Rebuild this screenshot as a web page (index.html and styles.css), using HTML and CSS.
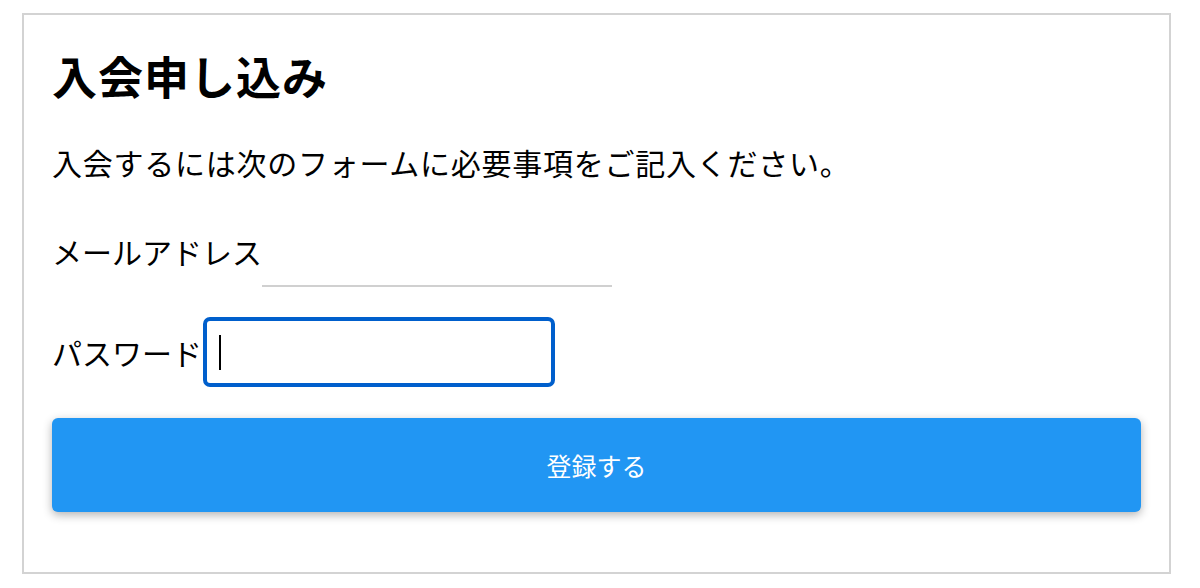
FILE: index.html
```html
<!DOCTYPE html>
<html lang="ja">
<head>
    <meta charset="UTF-8">
    <meta name="viewport" content="width=device-width, initial-scale=1.0">
    <title>入会申し込み</title>
    <link rel="stylesheet" href="styles.css">
</head>
<body>
    <div class="container">
        <h1>入会申し込み</h1>
        <p>入会するには次のフォームに必要事項をご記入ください。</p>

        <form class="signup-form">
            <div class="form-row">
                <label for="email">メールアドレス</label>
                <input type="email" id="email" class="text-input">
            </div>
            <div class="form-row">
                <label for="password">パスワード</label>
                <span class="input-wrap">
                    <input type="password" id="password" class="text-input is-focused">
                    <span class="caret"></span>
                </span>
            </div>
            <button type="button" class="submit-button">登録する</button>
        </form>
    </div>
</body>
</html>
```

FILE: styles.css
```css
body, html {
    margin: 0;
    padding: 0;
    font-family: "Noto Sans CJK JP", "Noto Sans", sans-serif;
    background-color: #fff;
    color: #000;
}

body {
    padding: 13px 29px 0 22px;
}

.container {
    border: 2px solid #d3d3d3;
    padding: 28px 28px 60px;
}

h1 {
    font-size: 45px;
    font-weight: 700;
    line-height: 54px;
    margin: 6px 0 0;
    letter-spacing: 1px;
}

p {
    font-size: 30px;
    line-height: 45px;
    margin: 37px 0 0;
    letter-spacing: 0.75px;
}

.signup-form {
    margin-top: 30px;
}

.form-row {
    display: flex;
    align-items: center;
    margin-bottom: 30px;
}

.form-row label {
    font-size: 30px;
    line-height: 45px;
}

.text-input {
    box-sizing: border-box;
    width: 350px;
    height: 72px;
    margin-left: 0;
    border: none;
    border-bottom: 2px solid #d0d0d0;
    background: transparent;
    font-size: 24px;
    outline: none;
}

.input-wrap {
    position: relative;
    display: inline-block;
    margin-left: 1px;
}

.text-input.is-focused {
    display: block;
    width: 352px;
    height: 70px;
    border: 4px solid #005fcc;
    border-radius: 7px;
}

.caret {
    position: absolute;
    left: 16px;
    top: 18px;
    width: 2px;
    height: 35px;
    background-color: #000;
}

.submit-button {
    display: block;
    width: 100%;
    height: 94px;
    margin-top: 31px;
    background-color: #2196f3;
    color: #fff;
    border: none;
    border-radius: 6px;
    font-family: inherit;
    font-size: 25px;
    box-shadow: 0 3px 10px rgba(0, 0, 0, 0.3);
    cursor: pointer;
}
```
